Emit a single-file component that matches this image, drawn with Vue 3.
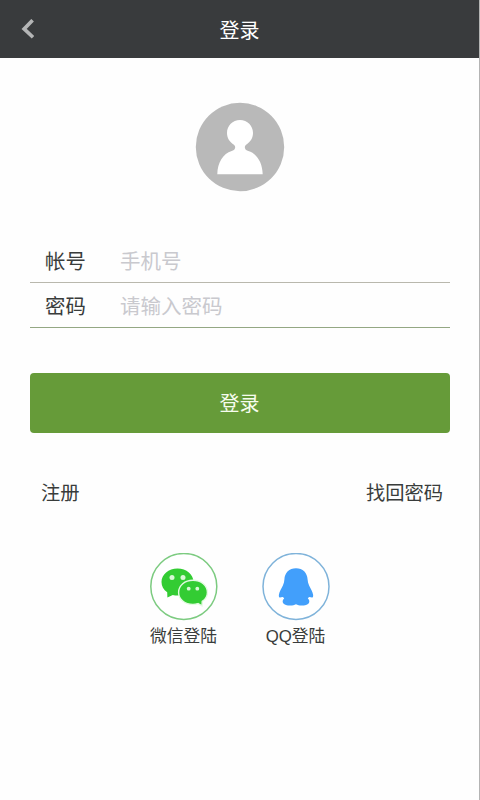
<script setup>
import { ref } from 'vue'

const account = ref('')
const password = ref('')
</script>

<template>
  <div class="page">
    <header class="bar">
      <button class="back" type="button">
        <svg width="14" height="20" viewBox="0 0 14 20">
          <path d="M12.600 1.200 4.100 9.900l8.900 8.400" fill="none" stroke="#b4b5b6" stroke-width="3.600" />
        </svg>
      </button>
      <h1 class="title">登录</h1>
    </header>

    <main class="content">
      <svg class="avatar" width="90" height="90" viewBox="0 0 90 90">
        <circle cx="45" cy="45" r="44.200" fill="#b9b9b9" />
        <path
          d="M45 18c-7.400 0-13 5.700-13 13 0 5 2.600 9 6.600 11.400 1.500 1.200 1.800 2.400 1.400 3.900-.4 1.400-1.500 2.200-3.300 2.700C28 51.600 22.600 60.500 22.300 72.300h45.400C67.400 60.500 62 51.600 53.300 49c-1.800-.5-2.900-1.300-3.300-2.700-.4-1.500-.1-2.700 1.400-3.900C55.400 40 58 36 58 31c0-7.300-5.600-13-13-13z"
          fill="#fff"
        />
      </svg>

      <form class="form" @submit.prevent>
        <label class="field">
          <span class="label">帐号</span>
          <input v-model="account" class="input" type="text" placeholder="手机号" />
        </label>
        <label class="field field-last">
          <span class="label">密码</span>
          <input v-model="password" class="input" type="password" placeholder="请输入密码" />
        </label>
        <button class="submit" type="submit">登录</button>
      </form>

      <nav class="links">
        <a class="link">注册</a>
        <a class="link">找回密码</a>
      </nav>

      <div class="social">
        <a class="provider">
          <svg width="68" height="68" viewBox="0 0 68 68">
            <circle cx="33.800" cy="33.500" r="33" fill="#fff" stroke="#7ccb80" stroke-width="1.500" />
            <path
              d="M27.500 15.400c-9 0-16 6-16 13.600 0 4.200 2 7.800 5.700 10.300l.2 5.200 5.400-2.600c1.500.4 3.100.6 4.700.6 9 0 16-6 16-13.500s-7-13.600-16-13.600z"
              fill="#3c3"
            />
            <path
              d="M43 27.300c-8.200 0-14.400 5.300-14.400 12.100S34.800 51.400 43 51.400c1.800 0 3.500-.3 5-.8l4 2.200.2-4.400c3.200-2.100 5.200-5.300 5.200-9 0-6.800-6.200-12.100-14.400-12.100z"
              fill="#3c3"
              stroke="#e4fbe2"
              stroke-width="1.400"
            />
            <g fill="#d9f8d6">
              <circle cx="22" cy="24.400" r="2.500" />
              <circle cx="33" cy="24.400" r="2.500" />
              <circle cx="38.700" cy="35.700" r="1.900" />
              <circle cx="47.300" cy="35.700" r="1.900" />
            </g>
          </svg>
          <span class="caption">微信登陆</span>
        </a>
        <a class="provider">
          <svg width="68" height="68" viewBox="0 0 68 68">
            <circle cx="34" cy="33.500" r="33" fill="#fff" stroke="#7fb3da" stroke-width="1.500" />
            <path
              d="M34 15.300c-6.800 0-11.300 4.500-11.600 11.300-.1 2-.6 3.900-1.500 5.900-1.700 3.200-3.500 6.300-4 9.200-.2 1.500 0 2.500.8 2.700 1 .2 1.900-.6 2.900-.5.7.1 1.100.8 1.600 1.600-1.600 1.300-2 3.200-1 4.700 1.200 1.700 3.800 2.300 7.200 2.300 2.200 0 4-.5 5.600-1.300 1.600.8 3.400 1.300 5.600 1.300 3.400 0 6-.6 7.200-2.300 1-1.500.6-3.400-1-4.700.5-.8.9-1.500 1.600-1.600 1-.1 1.900.7 2.900.5.800-.2 1-1.200.8-2.700-.5-2.900-2.300-6-4-9.200-.9-2-1.400-3.900-1.500-5.900C45.300 19.800 40.800 15.300 34 15.300z"
              fill="#429ffb"
            />
          </svg>
          <span class="caption">QQ登陆</span>
        </a>
      </div>
    </main>
  </div>
</template>

<style>
body {
  background: #fff;
}
</style>

<style scoped>
.page {
  box-sizing: border-box;
  width: 480px;
  height: 800px;
  overflow: hidden;
  background: #fefefe;
  border-right: 1px solid #b4b4b4;
  color: #393c3b;
  font-family: "Liberation Sans", "Noto Sans CJK SC", sans-serif;
}

.bar {
  display: grid;
  grid-template-columns: 60px 1fr 60px;
  align-items: center;
  height: 58px;
  margin-right: -1px;
  box-sizing: border-box;
  background: #393b3d;
  border-right: 1px solid #242628;
}

.back {
  display: flex;
  padding: 0 0 0 20px;
  border: 0;
  background: none;
}

.title {
  margin: 0;
  padding-top: 1px;
  color: #fff;
  font-family: "Noto Sans CJK SC", sans-serif;
  font-size: 20px;
  font-weight: 400;
  line-height: 31px;
  text-align: center;
}

.content {
  display: flex;
  flex-direction: column;
  width: 480px;
  padding: 44px 30px 0;
  box-sizing: border-box;
}

.avatar {
  align-self: center;
}

.form {
  display: flex;
  flex-direction: column;
  margin-top: 46px;
  font-family: "Noto Sans CJK SC", sans-serif;
}

.field {
  display: flex;
  align-items: center;
  height: 45px;
  box-sizing: border-box;
  padding-left: 15px;
  border-bottom: 1px solid #b9b8ad;
}

.field-last {
  border-bottom-color: #94a783;
}

.label {
  width: 75px;
  font-size: 20.400px;
  line-height: 30px;
}

.input {
  flex: 1;
  min-width: 0;
  height: 30px;
  padding: 0;
  border: 0;
  outline: 0;
  background: none;
  color: inherit;
  font-family: inherit;
  font-size: 20.500px;
}

.input::placeholder {
  color: #c9c9ce;
  opacity: 1;
}

.submit {
  height: 60px;
  margin-top: 45px;
  padding: 0 1px 2px 0;
  border: 0;
  border-radius: 4px;
  background: #669b39;
  color: #f6fcee;
  font-family: inherit;
  font-size: 20px;
}

.links {
  display: flex;
  justify-content: space-between;
  margin-top: 44px;
  padding: 0 7px 0 11px;
  font-family: "Noto Sans CJK SC", sans-serif;
}

.link {
  font-size: 19.300px;
  line-height: 30px;
}

.social {
  display: flex;
  justify-content: center;
  gap: 44px;
  margin-top: 46px;
}

.provider {
  display: flex;
  flex-direction: column;
  align-items: center;
  width: 68px;
}

.caption {
  margin-top: 3px;
  padding-right: 1px;
  font-size: 16.800px;
  line-height: 26px;
  white-space: nowrap;
}
</style>
